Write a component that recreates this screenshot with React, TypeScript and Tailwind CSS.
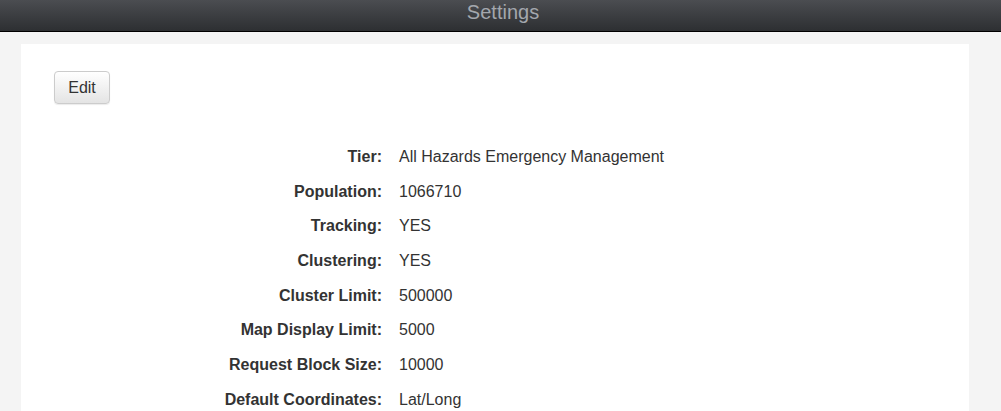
import React from "react";

const settings: [string, string][] = [
  ["Tier:", "All Hazards Emergency Management"],
  ["Population:", "1066710"],
  ["Tracking:", "YES"],
  ["Clustering:", "YES"],
  ["Cluster Limit:", "500000"],
  ["Map Display Limit:", "5000"],
  ["Request Block Size:", "10000"],
  ["Default Coordinates:", "Lat/Long"],
];

export default function App() {
  return (
    <div className="min-h-screen bg-[#f4f4f4] font-['Liberation_Sans',Arial,sans-serif] text-[#333]">
      {/* Top bar */}
      <div className="h-[32px] border-b border-black bg-gradient-to-b from-[#4b4d51] to-[#2d2f32] text-center">
        <span className="inline-block pl-[5px] text-[20px] leading-[24px] text-[#a3a7ad]">Settings</span>
      </div>

      {/* Card */}
      <div className="ml-[21px] mt-[12px] w-[948px] bg-white pl-[33px] pt-[27px] pb-6">
        <button className="h-[33px] w-[56px] rounded-[4px] border border-[#ccc] bg-gradient-to-b from-white to-[#e4e4e4] text-[16px] text-[#333] shadow-[0_1px_1px_rgba(0,0,0,0.08)]">
          Edit
        </button>

        <div className="mt-[43px]">
          {settings.map(([label, value]) => (
            <div key={label} className="grid h-[34.7px] grid-cols-[328px_1fr] gap-x-[17px] text-[16px] leading-[20px]">
              <div className="text-right font-bold">{label}</div>
              <div>{value}</div>
            </div>
          ))}
        </div>
      </div>
    </div>
  );
}
